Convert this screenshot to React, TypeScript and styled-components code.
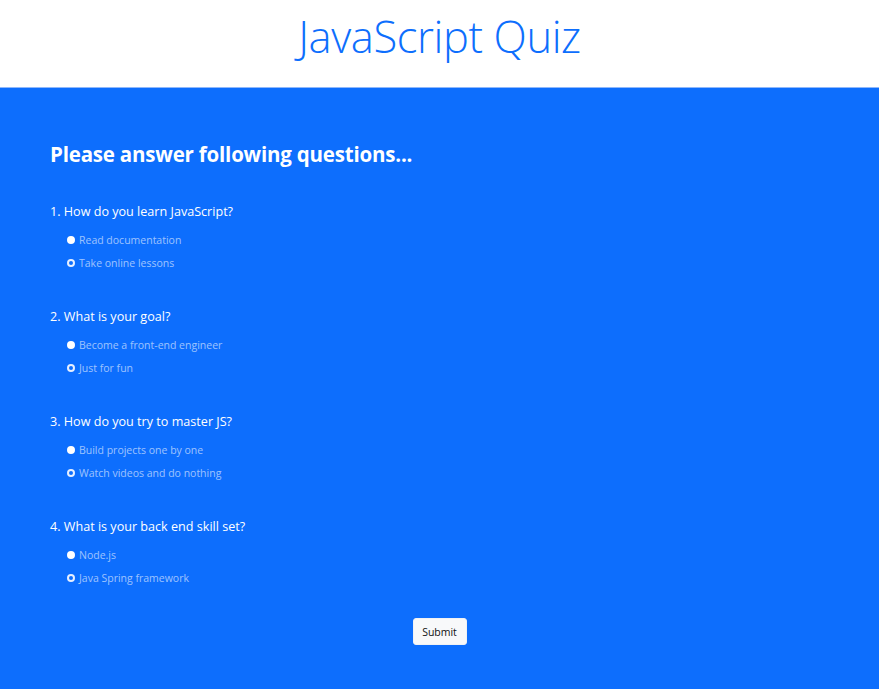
import React from "react";
import styled, { createGlobalStyle } from "styled-components";

const Global = createGlobalStyle`
  html, body { margin: 0; padding: 0; }
  body { font-family: "Open Sans", "Noto Sans", Arial, sans-serif; background: #0d6efd; }
`;

const Header = styled.header`
  height: 88px;
  background: #ffffff;
  display: flex;
  align-items: flex-start;
  justify-content: center;
  border-bottom: 1px solid #8fb8fb;
  box-sizing: border-box;
  padding-top: 5px;
`;

const Title = styled.h1`
  margin: 0;
  font-weight: 300;
  font-size: 43.5px;
  line-height: 64px;
  color: #0d6efd;
  letter-spacing: -0.4px;
`;

const Main = styled.main`
  background: #0d6efd;
  min-height: 601px;
  padding: 52px 50px 0;
  box-sizing: border-box;
  color: #ffffff;
`;

const Heading = styled.h2`
  margin: 0 0 35px;
  font-size: 20.5px;
  font-weight: 700;
  letter-spacing: -0.2px;
`;

const Question = styled.fieldset`
  border: 0;
  margin: 0 0 36px;
  padding: 0;
`;

const QText = styled.legend`
  padding: 0;
  font-size: 12.6px;
  margin-bottom: 11px;
`;

const Options = styled.div`
  display: flex;
  flex-direction: column;
  gap: 5px;
  padding-left: 17px;
`;

const Option = styled.label`
  display: flex;
  align-items: center;
  gap: 4px;
  font-size: 10.5px;
  color: rgba(255, 255, 255, 0.6);
  height: 18px;
`;

const Dot = styled.span<{ $filled?: boolean }>`
  width: 8px;
  height: 8px;
  border-radius: 50%;
  box-sizing: border-box;
  background: ${(p) => (p.$filled ? "#ffffff" : "#0d6efd")};
  border: 2px solid ${(p) => (p.$filled ? "#ffffff" : "#e6efff")};
`;

const Footer = styled.div`
  display: flex;
  justify-content: center;
  margin-top: -5px;
`;

const Submit = styled.button`
  width: 54px;
  height: 27px;
  background: #f8f9fa;
  border: 1px solid #f0f2f4;
  border-radius: 3px;
  font-family: inherit;
  font-size: 10.5px;
  color: #111;
  cursor: pointer;
`;

const data = [
  { q: "1. How do you learn JavaScript?", a: ["Read documentation", "Take online lessons"] },
  { q: "2. What is your goal?", a: ["Become a front-end engineer", "Just for fun"] },
  { q: "3. How do you try to master JS?", a: ["Build projects one by one", "Watch videos and do nothing"] },
  { q: "4. What is your back end skill set?", a: ["Node.js", "Java Spring framework"] },
];

export default function App() {
  return (
    <>
      <Global />
      <Header>
        <Title>JavaScript Quiz</Title>
      </Header>
      <Main>
        <Heading>Please answer following questions...</Heading>
        {data.map((d) => (
          <Question key={d.q}>
            <QText>{d.q}</QText>
            <Options>
              {d.a.map((a, i) => (
                <Option key={a}>
                  <Dot $filled={i === 0} />
                  {a}
                </Option>
              ))}
            </Options>
          </Question>
        ))}
        <Footer>
          <Submit>Submit</Submit>
        </Footer>
      </Main>
    </>
  );
}
